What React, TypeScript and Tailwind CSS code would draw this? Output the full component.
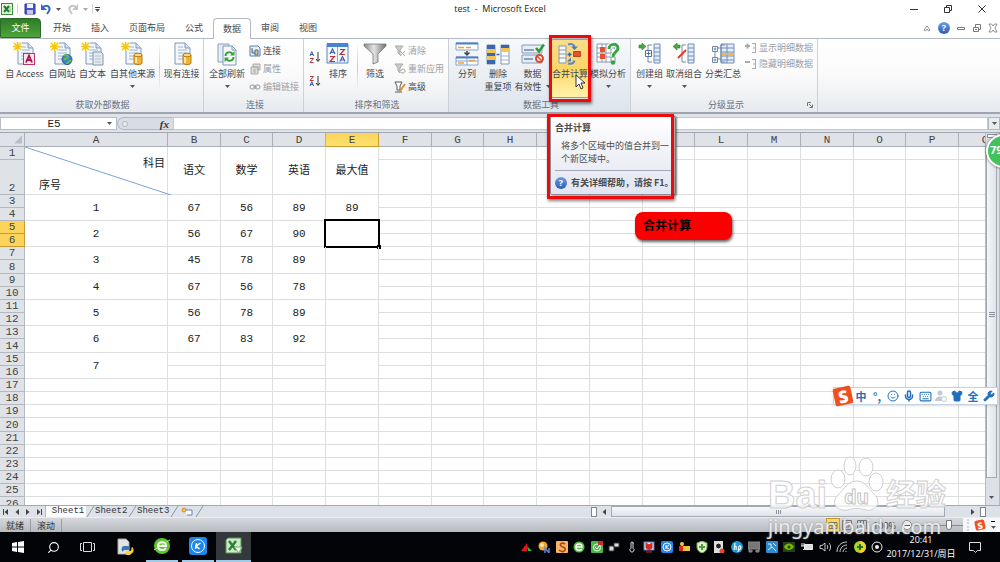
import React from "react";
import { Search, Wrench, Mic, Keyboard, Smile, Shirt, MessageSquare, Thermometer } from "lucide-react";

const COLUMNS = "BCDEFGHIJKLMNOPQ".split("");
const ROWS = Array.from({ length: 26 }, (_, i) => i + 1);

const SCORES = [
  ["1", "67", "56", "89", "89"],
  ["2", "56", "67", "90", ""],
  ["3", "45", "78", "89", ""],
  ["4", "67", "56", "78", ""],
  ["5", "56", "78", "89", ""],
  ["6", "67", "83", "92", ""],
];

function Svg({ size = 24, className = "", children }: {
  size?: number;
  className?: string;
  children: React.ReactNode;
}) {
  return (
    <svg viewBox={`0 0 ${size} ${size}`} width={size} height={size} className={`shrink-0 ${className}`} fill="none" aria-hidden="true">
      {children}
    </svg>
  );
}

function Doc({ star = true, children }: { star?: boolean; children?: React.ReactNode }) {
  return (
    <Svg>
      <path d="M5 1h10l5 5v16H5z" fill="#f3f7fc" stroke="#7f98b8" />
      <path d="M15 1v5h5" fill="#d5e2f1" stroke="#7f98b8" />
      <path d="M8 8h9M8 11h9M8 14h9M8 17h9M8 5h5" stroke="#9db4d2" />
      {star && (
        <>
          <path d="M0 0h9v9H0z" fill="#fff9c9" opacity=".8" />
          <path d="M4.500 0v9M0 4.500h9M1 1l7 7M8 1L1 8" stroke="#f3c613" strokeWidth="1.300" />
        </>
      )}
      {children}
    </Svg>
  );
}

const Cylinder = () => (
  <>
    <path d="M13 13v8c0 2 8 2 8 0v-8z" fill="#f0b432" stroke="#b97a10" />
    <path d="M15 14v7" stroke="#fde6a0" strokeWidth="2" />
    <ellipse cx="17" cy="13" rx="4" ry="1.800" fill="#fbdc82" stroke="#b97a10" />
  </>
);

const AccessIcon = () => (
  <Doc>
    <rect x="10.500" y="11.500" width="11" height="11" fill="#fbe4ec" stroke="#c2356a" />
    <path d="M13 20.500l3-7 3 7M14 18h4" stroke="#a6154c" strokeWidth="1.800" />
  </Doc>
);

const WebIcon = () => (
  <Doc>
    <circle cx="17" cy="17.500" r="5" fill="#3f7fd2" stroke="#28579c" />
    <path d="M14 14c2-2 4-1 4 1s-3 1-4 3M17 22c0-3 3-2 4-4" stroke="#5fbf4a" strokeWidth="2" />
  </Doc>
);

const TextIcon = () => (
  <Doc>
    <path d="M12 10h8l2 2v11H12z" fill="#e6eaf0" stroke="#8292a8" />
    <path d="M14 14h6M14 17h6M14 20h6" stroke="#b4c0cf" />
  </Doc>
);

const RefreshAllIcon = () => (
  <Svg>
    <path d="M3 2h11v18H3z" fill="#e3ecf7" stroke="#8aa1be" />
    <path d="M8 4h9l4 4v15H8z" fill="#f7fafd" stroke="#7f98b8" />
    <path d="M17 4v4h4" stroke="#7f98b8" />
    <path d="M10.500 14c0-4 5-5 7-2M18.500 15c0 4-5 5-7 2" stroke="#35a43b" strokeWidth="2" />
    <path d="M19.500 9v4.500H15zM9.500 20v-4.500H14z" fill="#35a43b" />
  </Svg>
);

const SortIcon = () => (
  <Svg>
    <path d="M1 2h21v19H1z" fill="#f4f8fd" stroke="#5b82bd" />
    <path d="M1 1h21v4H1z" fill="#4b83d3" />
    <path d="M11.500 5v16" stroke="#8fa8cb" />
    <path d="M4 12l2.500-5L9 12M5 10.500h3" stroke="#3561b0" strokeWidth="1.200" />
    <path d="M14 7.500h4.500l-4.500 5h5" stroke="#b3353d" strokeWidth="1.200" />
    <path d="M4 14.500h4.500l-4.500 5h5" stroke="#b3353d" strokeWidth="1.200" />
    <path d="M14 19.500l2.500-5 2.500 5M15 18h3" stroke="#3561b0" strokeWidth="1.200" />
  </Svg>
);

const FilterIcon = () => (
  <Svg>
    <defs>
      <linearGradient id="funnel" x1="0" x2="1">
        <stop offset="0" stopColor="#8b8b8b" />
        <stop offset=".45" stopColor="#e4e4e4" />
        <stop offset="1" stopColor="#6f6f6f" />
      </linearGradient>
    </defs>
    <path d="M1 2h22v2l-8 8v8l-5 2V12L1 4z" fill="url(#funnel)" stroke="#7a7a7a" strokeWidth=".8" />
  </Svg>
);

const SplitIcon = () => (
  <Svg>
    <path d="M1 1h22v7H1z" fill="#fff" stroke="#86a3cd" />
    <path d="M1 1.500h22" stroke="#4f7fc7" strokeWidth="2" />
    <path d="M3 5.500h6M11 5.500h5" stroke="#eba43b" strokeWidth="1.500" />
    <path d="M12 9v4M9.500 10.500L12 13l2.500-2.500" stroke="#444" strokeWidth="1.500" />
    <path d="M1 15h22v8H1zM12 15v8M1 19h22" fill="#fff" stroke="#86a3cd" />
    <path d="M1 15.500h22" stroke="#4f7fc7" strokeWidth="2" />
    <path d="M3 21h6M14 18.500h6" stroke="#eba43b" strokeWidth="1.500" />
  </Svg>
);

const DedupeIcon = () => (
  <Svg>
    <path d="M1 3h8v19H1zM15 3h8v19h-8z" fill="#fff" stroke="#8497b5" />
    <path d="M1 3h8v4H1zM1 11h8v3H1zM1 18h8v4H1zM15 3h8v3h-8z" fill="#3b66b3" />
    <path d="M1 7h8v4H1zM1 14h8v4H1zM15 6h8v4h-8z" fill="#f5c54f" />
    <path d="M15 14h8M15 18h8" stroke="#9aaecb" />
    <path d="M10.500 12.500h3" stroke="#3b66b3" strokeWidth="1.500" />
  </Svg>
);

const ValidIcon = () => (
  <Svg>
    <path d="M1 3h20v8H1zM1 13h20v8H1z" fill="#e5edf7" stroke="#8c9cb5" />
    <path d="M3 8h10M3 17h9" stroke="#6f87a8" strokeWidth="1.500" />
    <path d="M15 6l3 3.500 5-7" stroke="#2c9a36" strokeWidth="2.500" />
    <circle cx="18.500" cy="16.500" r="3.500" fill="#fff" stroke="#dc4a2b" strokeWidth="2" />
    <path d="M16 14l5 5" stroke="#dc4a2b" strokeWidth="1.500" />
  </Svg>
);

const ConsolidateIcon = () => (
  <Svg>
    <path d="M1 4h7v17H1zM1 8h7M1 12h7M1 16h7" fill="#f6f8fb" stroke="#8a98ad" />
    <path d="M9.500 12.500h4M11.500 10.500v4" stroke="#2f5fae" strokeWidth="1.500" />
    <path d="M15.500 9.500h7v5h-7z" fill="#e8502f" stroke="#c2431f" />
    <path d="M10 2.500c4-1 6 0 6.500 2.500M10 21.500c4 1 6-1 6.500-3" stroke="#5b86cb" strokeWidth="2" />
    <path d="M13 4.500h7L16.500 8zM13 19.500h-4l4-4z" fill="#4a79c4" />
  </Svg>
);

const WhatIfIcon = () => (
  <Svg>
    <path d="M1 2h18v18H1zM1 6h18M1 11h18M1 15h18M6 2v18M10 2v18M15 2v18" fill="#fff" stroke="#8796ae" />
    <path d="M4 5h5v5H4zM4 12h5v5H4z" fill="#e5502e" />
    <path d="M13 7c0-6 9-6 9-1 0 4-5 4-5 9" stroke="#fff" strokeWidth="5" />
    <path d="M13 7c0-6 9-6 9-1 0 4-5 4-5 9" stroke="#3aa544" strokeWidth="3" />
    <circle cx="17" cy="20.500" r="2.300" fill="#3aa544" />
  </Svg>
);

function TreeIcon({ kind }: { kind: "group" | "ungroup" | "subtotal" }) {
  return (
    <Svg>
      <path d={kind === "subtotal" ? "M10 2h13v19H10zM10 6h13M10 10h13M10 14h13M10 18h13M16 2v19" : "M16 2h6v19h-6zM16 6h6M16 10h6M16 14h6M16 18h6"} fill="#e4edf9" stroke="#6f8db9" />
      <path d="M14 3h-4v17h4" stroke="#7487a3" />
      {kind === "group" && <path d="M7.500 8.500h6v6h-6zM10.500 9.500v4M8.500 11.500h4" fill="#fff" stroke="#566f94" />}
      {kind === "ungroup" && <path d="M6 16l8-8" stroke="#e0392b" strokeWidth="2" />}
      {kind === "subtotal" ? (
        <>
          <path d="M1.500 4.500h5v5h-5zM1.500 15.500h5v5h-5zM7 6h3M7 17h3M4 9v6M4 5.500v3M2.500 7h3M4 16.500v3M2.500 18h3" fill="#fff" stroke="#7487a3" />
          <path d="M11 12h4M17 12h5" stroke="#f0b44a" strokeWidth="2" />
        </>
      ) : (
        <path d={kind === "group" ? "M1 3h3V1l4 3.500L4 8V6H1z" : "M8 3H5V1L1 4.500 5 8V6h3z"} fill="#49a842" stroke="#2d7c2b" strokeWidth=".6" />
      )}
    </Svg>
  );
}

function SortSmall({ desc = false }: { desc?: boolean }) {
  return (
    <Svg size={12}>
      <g transform={desc ? "translate(0 6)" : undefined}>
        <path d="M1 5l1.800-4.500L4.600 5M1.500 3.500h2.500" stroke="#3561b0" />
      </g>
      <g transform={desc ? "translate(0 -6)" : undefined}>
        <path d="M1 7.500h3.500L1 11.500h3.500" stroke="#b3353d" />
      </g>
      <path d="M9 1v9M7 8l2 2.500L11 8" stroke="#333" />
    </Svg>
  );
}

function Caret({ className = "" }: { className?: string }) {
  return (
    <svg viewBox="0 0 5 3" width="5" height="3" className={`shrink-0 ${className}`} aria-hidden="true">
      <path d="M0 0h5L2.500 3z" fill="#555" />
    </svg>
  );
}

function BigButton({ icon, label, second, caret, className = "pt-[3px]" }: {
  icon: React.ReactNode;
  label: string;
  second?: string;
  caret?: boolean;
  className?: string;
}) {
  return (
    <button type="button" className={`flex shrink-0 flex-col items-center text-[9px] leading-[13px] whitespace-nowrap text-[#44484f] ${className}`}>
      {icon}
      <span className="mt-px">{label}</span>
      {(second || caret) && (
        <span className="flex h-[13px] items-center gap-1">
          {second}
          {caret && <Caret />}
        </span>
      )}
    </button>
  );
}

function SmallButton({ icon, label, disabled }: { icon: React.ReactNode; label: string; disabled?: boolean }) {
  return (
    <button type="button" disabled={disabled} className="flex items-center gap-0.5 text-[9px] leading-[13px] whitespace-nowrap text-[#44484f] disabled:text-[#9c9fa4]">
      {icon}
      {label}
    </button>
  );
}

function Group({ label, className = "", launcher, children }: {
  label: string;
  className?: string;
  launcher?: boolean;
  children: React.ReactNode;
}) {
  return (
    <div className={`relative flex shrink-0 flex-col border-r border-[#cdd1d7] ${className}`}>
      <div className="flex min-h-0 flex-1">{children}</div>
      <div className="h-3.5 text-center text-[9px] leading-[13px] text-[#68717e]">{label}</div>
      {launcher && (
        <button type="button" aria-label="对话框" className="absolute right-1 bottom-1">
          <Svg size={6}>
            <path d="M.5 4V.5H4M2 2l3 3M5.500 2.500v3h-3" stroke="#777" />
          </Svg>
        </button>
      )}
    </div>
  );
}

const Divider = ({ className = "" }: { className?: string }) => (
  <div className={`mt-1 h-12 w-px bg-linear-to-b from-transparent via-[#c5c9cf] to-transparent ${className}`} />
);

function TitleBar() {
  return (
    <header className="relative flex h-[18px] shrink-0 items-center justify-between px-px">
      <div className="flex items-center">
        <Svg size={12}>
          <rect x=".5" y=".5" width="11" height="11" fill="#e4f3de" stroke="#3b8a3e" />
          <path d="M3 3l5 6M8 3L3 9" stroke="#1f7a2d" strokeWidth="2" />
          <path d="M9 3v6" stroke="#7fbf7a" />
        </Svg>
        <div className="mx-1 h-2.5 w-px bg-gray-300" />
        <button type="button" aria-label="保存" className="ml-0.5">
          <Svg size={12}>
            <path d="M1 1h10v10H1z" fill="#4a55c8" stroke="#2f3794" />
            <path d="M3 1h6v4H3z" fill="#eef1ff" />
            <path d="M3 7h6v4H3z" fill="#c3c9ef" />
          </Svg>
        </button>
        <button type="button" aria-label="撤消" className="ml-1 flex items-center gap-1">
          <Svg size={12}>
            <path d="M3 4c4-3 8 0 6 4l-2 3" stroke="#3769c4" strokeWidth="2" />
            <path d="M1 1v6h6z" fill="#3769c4" />
          </Svg>
          <Caret />
        </button>
        <button type="button" aria-label="恢复" className="ml-1.5 flex items-center gap-1">
          <Svg size={12}>
            <path d="M9 4C5 1 1 4 3 8l2 3" stroke="#c2c5ca" strokeWidth="2" />
            <path d="M11 1v6H5z" fill="#c2c5ca" />
          </Svg>
          <Caret className="opacity-50" />
        </button>
        <div className="mr-0.5 ml-1 h-2.5 w-px bg-gray-300" />
        <button type="button" aria-label="自定义快速访问工具栏" className="flex flex-col items-center gap-px">
          <span className="h-px w-[5px] bg-gray-700" />
          <Caret />
        </button>
      </div>
      <h1 className="absolute inset-x-0 mx-auto w-max font-['Open_Sans'] text-[9px] leading-[18px] text-[#222]">test&nbsp; -&nbsp; Microsoft Excel</h1>
      <div className="flex items-center gap-6 pr-3">
        <button type="button" aria-label="最小化">
          <Svg size={10}><path d="M1 5.500h8" stroke="#333" /></Svg>
        </button>
        <button type="button" aria-label="还原">
          <Svg size={10}><path d="M1.500 3.500h5v5h-5zM3.500 3V1.500h5v5H7" stroke="#333" /></Svg>
        </button>
        <button type="button" aria-label="关闭">
          <Svg size={10}><path d="M1.500 1.500l7 7M8.500 1.500l-7 7" stroke="#333" /></Svg>
        </button>
      </div>
    </header>
  );
}

function TabRow() {
  const tab = "h-full w-[38px]";
  return (
    <nav className="flex h-[21px] shrink-0 border-b border-[#b3b9c2] text-[9px] leading-5 whitespace-nowrap text-[#44484f]">
      <button type="button" className="mr-0.5 w-[41px] rounded-tr-sm border border-[#2b6b26] bg-linear-to-b from-[#2f7b2a] to-[#4ea53a] leading-[18px] text-white">文件</button>
      <button type="button" className={tab}>开始</button>
      <button type="button" className={tab}>插入</button>
      <button type="button" className="h-full w-14">页面布局</button>
      <button type="button" className={tab}>公式</button>
      <button type="button" className="-mb-px h-[21px] w-[38px] rounded-t-sm border border-b-0 border-[#b3b9c2] bg-white leading-[18px]">数据</button>
      <button type="button" className={tab}>审阅</button>
      <button type="button" className={tab}>视图</button>
      <div className="ml-auto flex items-center gap-1.5 pr-0.5">
        <button type="button" aria-label="功能区最小化">
          <Svg size={10}><path d="M2 7L5 3l3 4-1.500 1L5 6 3.500 8z" stroke="#777" strokeWidth=".8" /></Svg>
        </button>
        <button type="button" aria-label="帮助"><HelpDot /></button>
        <button type="button" aria-label="最小化窗口">
          <Svg size={10}><path d="M1.500 4.500h7v2h-7z" stroke="#777" /></Svg>
        </button>
        <button type="button" aria-label="还原窗口">
          <Svg size={10}><path d="M1.500 4.500h5v4h-5zM3.500 4V1.500h5v5H7M3 6.500h2" stroke="#777" /></Svg>
        </button>
        <button type="button" aria-label="关闭窗口">
          <Svg size={10}><path d="M1 1h2.500L5 3l1.500-2H9L7 5l2 4H6.500L5 7 3.500 9H1l2-4z" stroke="#777" strokeWidth=".8" /></Svg>
        </button>
      </div>
    </nav>
  );
}

function HelpDot() {
  return (
    <span className="flex size-3 shrink-0 items-center justify-center rounded-full bg-linear-to-b from-[#6f9be0] to-[#2a5db8] font-['Open_Sans'] text-[9px] leading-3 font-bold text-white">?</span>
  );
}

function Ribbon() {
  return (
    <div className="flex h-[75px] shrink-0 border-b-2 border-[#9fa5ae] bg-linear-to-b from-white via-[#fafafb] to-[#e7eaee]">
      <Group label="获取外部数据" className="w-[204px] pl-0.5">
        <BigButton icon={<AccessIcon />} label="自 Access" className="w-[45px] pt-[3px]" />
        <BigButton icon={<WebIcon />} label="自网站" className="w-[30px] pt-[3px]" />
        <BigButton icon={<TextIcon />} label="自文本" className="w-[31px] pt-[3px]" />
        <BigButton icon={<Doc><Cylinder /></Doc>} label="自其他来源" caret className="w-[49px] pt-[3px]" />
        <Divider className="mx-0.5" />
        <BigButton icon={<Doc star={false}><Cylinder /></Doc>} label="现有连接" className="w-[39px] pt-[3px]" />
      </Group>
      <Group label="连接" className="w-[100px] pl-[3px]">
        <BigButton icon={<RefreshAllIcon />} label="全部刷新" caret className="w-10 pt-[3px]" />
        <div className="flex flex-col gap-[5px] pt-[5px] pl-0.5">
          <SmallButton
            label="连接"
            icon={
              <Svg size={12}>
                <path d="M1 1h8l2 2v8H1z" fill="#e8f0fa" stroke="#5a7db0" />
                <path d="M3 3v5h3M6 5h3v5H6z" fill="#f0c050" stroke="#3f6db2" />
              </Svg>
            }
          />
          <SmallButton
            label="属性"
            disabled
            icon={
              <Svg size={12}>
                <path d="M2 4h7v7H2zM4 1h7v6H9V4H4zM4 7h3M4 9h3" fill="#ddd" stroke="#aaa" />
              </Svg>
            }
          />
          <SmallButton
            label="编辑链接"
            disabled
            icon={
              <Svg size={12}>
                <rect x="1" y="4" width="5" height="4" rx="2" stroke="#999" />
                <rect x="6" y="4" width="5" height="4" rx="2" stroke="#999" />
                <path d="M4 6h4" stroke="#999" />
              </Svg>
            }
          />
        </div>
      </Group>
      <Group label="排序和筛选" className="w-[145px] pl-0.5">
        <div className="flex w-[18px] flex-col items-center gap-3 pt-3">
          <button type="button" aria-label="升序"><SortSmall /></button>
          <button type="button" aria-label="降序"><SortSmall desc /></button>
        </div>
        <BigButton icon={<SortIcon />} label="排序" className="w-7 pt-[3px]" />
        <Divider className="mx-[5px]" />
        <BigButton icon={<FilterIcon />} label="筛选" className="w-6 pt-[3px]" />
        <div className="flex flex-col gap-[5px] pt-[5px] pl-[7px]">
          <SmallButton
            label="清除"
            disabled
            icon={<Svg size={12}><path d="M1 1h8L6 5v5L4 8V5zM6 6l5 5M11 6l-5 5" fill="#ccc" stroke="#aaa" /></Svg>}
          />
          <SmallButton
            label="重新应用"
            disabled
            icon={<Svg size={12}><path d="M1 1h8L6 5v5L4 8V5z" fill="#ccc" stroke="#aaa" /><path d="M7 8c1-3 4-2 4 0s-3 3-4 1" stroke="#999" /></Svg>}
          />
          <SmallButton
            label="高级"
            icon={<Svg size={12}><path d="M1 1h7L6 5v4L3 9V5zM1 11h7" fill="#fff" stroke="#555" /><path d="M6 10l5-7" stroke="#d7932c" strokeWidth="2" /></Svg>}
          />
        </div>
      </Group>
      <Group label="数据工具" className="w-[182px] bg-linear-to-b from-[#f7f9fb] to-[#dde4ec] pl-[3px]">
        <BigButton icon={<SplitIcon />} label="分列" className="w-[30px] pt-[3px]" />
        <BigButton icon={<DedupeIcon />} label="删除" second="重复项" className="w-8 pt-[3px]" />
        <BigButton icon={<ValidIcon />} label="数据" second="有效性" caret className="w-[37px] pt-[3px]" />
        <div className="relative">
          <BigButton
            icon={<ConsolidateIcon />}
            label="合并计算"
            className="h-[59px] w-[38px] rounded-xs border border-[#c29b29] bg-linear-to-b from-[#f8dd8b] via-[#fbd667] to-[#fff3a8] pt-0.5"
          />
          <div className="absolute -inset-x-0.5 -top-1 -bottom-1 border-3 border-[#ee0a0a] shadow-[1px_2px_3px_#00000080]" />
          <svg viewBox="0 0 10 16" width="10" height="16" className="absolute top-[35px] left-6" aria-hidden="true">
            <path d="M1 1v12l3-3 2 5 2-1-2-5h4z" fill="#fff" stroke="#222" strokeWidth=".9" />
          </svg>
        </div>
        <BigButton icon={<WhatIfIcon />} label="模拟分析" caret className="w-[38px] pt-[3px]" />
      </Group>
      <Group label="分级显示" className="w-[187px] pl-1" launcher>
        <BigButton icon={<TreeIcon kind="group" />} label="创建组" caret className="w-[29px] pt-[3px]" />
        <BigButton icon={<TreeIcon kind="ungroup" />} label="取消组合" caret className="w-10 pt-[3px]" />
        <BigButton icon={<TreeIcon kind="subtotal" />} label="分类汇总" className="w-[38px] pt-[3px]" />
        <div className="flex flex-col gap-[3px] pt-0.5 pl-[3px]">
          <SmallButton
            label="显示明细数据"
            disabled
            icon={<Svg size={12}><path d="M0 4h5M2.500 1.500v5" stroke="#aaa" strokeWidth="2" /><path d="M7 1.500h3M10.500 1v10M7 10.500h3M8 6h2" stroke="#aaa" /></Svg>}
          />
          <SmallButton
            label="隐藏明细数据"
            disabled
            icon={<Svg size={12}><path d="M0 4h5" stroke="#aaa" strokeWidth="2" /><path d="M7 1.500h3M10.500 1v10M7 10.500h3M8 6h2" stroke="#aaa" /></Svg>}
          />
        </div>
      </Group>
    </div>
  );
}

function FormulaBar() {
  return (
    <div className="flex h-[19px] shrink-0 border-b border-[#a3a9b3] bg-[#dfe3e9] pt-[3px] pb-0.5">
      <div className="flex w-[117px] items-center border border-[#b9bec6] bg-white pr-1">
        <input aria-label="名称框" defaultValue="E5" className="w-0 flex-1 bg-transparent text-center font-['Liberation_Mono'] text-[11px] leading-3 text-[#222] outline-none" />
        <Caret />
      </div>
      <div className="flex w-14 items-center justify-between rounded-l-full border border-r-0 border-[#b3b8c0] bg-[#d9dde3] px-1">
        <span className="size-1.5 rounded-full border border-[#b3b8c0] bg-[#e8ebef]" />
        <button type="button" aria-label="插入函数" className="font-['Liberation_Serif'] text-[11px] leading-3 font-bold text-[#333] italic">fx</button>
      </div>
      <input aria-label="编辑栏" className="w-0 flex-1 border border-[#c4c8cf] bg-white outline-none" />
      <button type="button" aria-label="展开编辑栏" className="flex w-3 items-center justify-center border border-[#b3b8c0] bg-[#e9ecf0]">
        <Caret />
      </button>
    </div>
  );
}

const cell = "border-r border-b border-[#dcdee0] p-0";

function rowHeight(n: number) {
  if (n === 2) return "h-[35px] align-bottom";
  return n > 2 && (n - 2) % 6 === 0 ? "h-3.5" : "h-[13px]";
}

function dataCells(n: number) {
  if (n === 1) {
    return (
      <>
        <td rowSpan={2} className={`${cell} relative text-[11px] leading-4`}>
          <div className="flex h-[46px] flex-col justify-between pt-2">
            <span className="pr-0.5 text-right">科目</span>
            <span className="pl-3.5 text-left">序号</span>
          </div>
          <svg viewBox="0 0 146 48" width="146" height="48" className="absolute top-0 left-0 z-10" aria-hidden="true">
            <path d="M0 0l146 48" stroke="#7ba3d6" />
          </svg>
        </td>
        {["语文", "数学", "英语", "最大值"].map((t) => (
          <td key={t} rowSpan={2} className={`${cell} text-[11px] leading-4`}>{t}</td>
        ))}
      </>
    );
  }
  if (n >= 3 && n <= 14) {
    if (n % 2 === 0) return null;
    return SCORES[(n - 3) / 2].map((v, i) => (
      <td key={i} rowSpan={2} className={`${cell} relative`}>
        {v}
        {n === 5 && i === 4 && (
          <span className="absolute -inset-0.5 border-2 border-black">
            <span className="absolute -right-[3px] -bottom-[3px] size-1 bg-black" />
          </span>
        )}
      </td>
    ));
  }
  if (n === 15) {
    return (
      <>
        <td rowSpan={2} className={cell}>7</td>
        <td className={cell} />
        <td className={cell} />
        <td className={cell} />
        <td rowSpan={2} className={cell} />
      </>
    );
  }
  const count = n === 2 ? 0 : n === 16 ? 3 : 5;
  return Array.from({ length: count }, (_, i) => <td key={i} className={cell} />);
}

function Sheet() {
  return (
    <div className="min-w-0 flex-1 overflow-hidden bg-white">
      <table className="w-px table-fixed border-separate border-spacing-0 text-center font-['Liberation_Mono','Noto_Sans_CJK_SC',monospace] text-[11px] leading-3 text-[#222]">
        <colgroup>
          <col className="w-[25px]" />
          <col className="w-[143px]" />
          {COLUMNS.map((c, i) => (
            <col key={c} className={i % 4 === 1 ? "w-[52px]" : "w-[53px]"} />
          ))}
        </colgroup>
        <thead>
          <tr>
            <th aria-label="全选" className="h-3.5 border-r border-b border-[#aab0b9] bg-[#dfe2e7] p-0">
              <span className="mr-0.5 ml-auto block size-2 bg-[#b9bec6] [clip-path:polygon(100%_0,100%_100%,0_100%)]" />
            </th>
            {["A", ...COLUMNS].map((c) => (
              <th
                key={c}
                className={`h-3.5 border-r border-b p-0 font-normal text-[#444] ${c === "E" ? "border-[#c99a2e] bg-linear-to-b from-[#fcd35e] to-[#fbe36b]" : "border-[#aab0b9] bg-[#dfe2e7]"}`}
              >
                {c}
              </th>
            ))}
          </tr>
        </thead>
        <tbody>
          {ROWS.map((n) => (
            <tr key={n}>
              <th className={`border-r border-b p-0 font-normal text-[#444] ${rowHeight(n)} ${n === 5 || n === 6 ? "border-[#c99a2e] bg-[#fcd45c]" : "border-[#b4b9c1] bg-[#dfe2e7]"}`}>
                {n}
              </th>
              {dataCells(n)}
              {COLUMNS.slice(4).map((c) => (
                <td key={c} className={cell} />
              ))}
            </tr>
          ))}
        </tbody>
      </table>
    </div>
  );
}

function VerticalScroll() {
  return (
    <div className="flex w-[15px] shrink-0 flex-col items-center border-x border-[#b5bac3] bg-[#dde1e7] pr-0.5">
      <div className="mt-px h-1 w-2.5 border border-[#8b919b] bg-white" />
      <div className="flex h-3 items-center"><Caret className="rotate-180" /></div>
      <div className="flex w-full flex-1 flex-col items-center justify-center gap-px border border-[#a3a9b3] bg-linear-to-r from-[#f5f6f8] to-[#dfe3e9]">
        <span className="h-px w-1.5 bg-[#8b919b]" />
        <span className="h-px w-1.5 bg-[#8b919b]" />
        <span className="h-px w-1.5 bg-[#8b919b]" />
      </div>
      <div className="flex h-[27px] items-end pb-1.5"><Caret /></div>
    </div>
  );
}

function Arrow({ flip, bar }: { flip?: boolean; bar?: boolean }) {
  return (
    <svg viewBox="0 0 6 6" width="6" height="6" className={flip ? "-scale-x-100" : ""} aria-hidden="true">
      <path d="M5 0v6L1.500 3z" fill="#444" />
      {bar && <path d="M.5 0v6" stroke="#444" />}
    </svg>
  );
}

function SheetTabs() {
  return (
    <div className="flex h-3 shrink-0 border-t border-[#a3a9b3] bg-[#dde1e8]">
      <div className="flex w-[46px] items-center justify-around border-r border-[#b5bac3]">
        <button type="button" aria-label="第一张"><Arrow bar /></button>
        <button type="button" aria-label="上一张"><Arrow /></button>
        <button type="button" aria-label="下一张"><Arrow flip /></button>
        <button type="button" aria-label="最后一张"><Arrow flip bar /></button>
      </div>
      <div className="flex flex-1 font-['Liberation_Mono'] text-[9px] leading-[11px] text-[#333]">
        <button type="button" className="w-10 bg-white pl-1">Sheet1</button>
        {["Sheet2", "Sheet3"].map((t) => (
          <button key={t} type="button" className="flex w-[42px] items-center">
            <Slash />
            {t}
          </button>
        ))}
        <button type="button" aria-label="插入工作表" className="flex items-center gap-0.5">
          <Slash />
          <svg viewBox="0 0 12 10" width="12" height="10" fill="none" aria-hidden="true">
            <path d="M3 3h8v5H6" fill="#fff" stroke="#5d86c4" />
            <circle cx="3" cy="3" r="2" fill="#f7c25a" stroke="#d98b28" />
          </svg>
          <Slash />
        </button>
      </div>
      <div className="flex w-[409px] items-center">
        <span className="h-2.5 w-1.5 border border-[#7f8690] bg-white" />
        <button type="button" aria-label="向左滚动" className="px-1"><Arrow /></button>
        <div className="flex h-full w-[334px] items-center justify-center gap-px border border-[#a3a9b3] bg-linear-to-b from-[#f7f8fa] to-[#dfe3e9]">
          <span className="h-1 w-px bg-[#8b919b]" />
          <span className="h-1 w-px bg-[#8b919b]" />
          <span className="h-1 w-px bg-[#8b919b]" />
        </div>
        <button type="button" aria-label="向右滚动" className="ml-auto px-1"><Arrow flip /></button>
        <span className="mr-3.5 h-2.5 w-1.5 border border-[#7f8690] bg-white" />
      </div>
    </div>
  );
}

const Slash = () => (
  <svg viewBox="0 0 9 11" width="9" height="11" className="shrink-0" aria-hidden="true">
    <path d="M1 11L8 0" stroke="#8f959e" />
  </svg>
);

function SogouMark({ className = "" }: { className?: string }) {
  return (
    <span className={`flex shrink-0 items-center justify-center rounded-xs bg-[#f0501e] font-['Open_Sans'] font-extrabold text-white ${className}`}>S</span>
  );
}

function StatusBar() {
  return (
    <div className="flex h-[15px] shrink-0 items-center border-t border-[#eceef1] bg-linear-to-b from-[#d6d8dc] to-[#b6bbc1] text-[9px] leading-[13px] text-[#333]">
      <span className="w-[31px] border-r border-[#989da5] pl-1.5">就绪</span>
      <span className="w-[31px] border-r border-[#989da5] pl-1.5">滚动</span>
      <div className="ml-auto flex items-center">
        <button type="button" aria-label="普通" className="flex h-3.5 w-3.5 items-center justify-center border border-[#c29b29] bg-[#fcd765]">
          <Svg size={10}><path d="M1 2.500h8v6H1zM1 5.500h8M4 2v6M6.500 2v6" stroke="#776" /></Svg>
        </button>
        <button type="button" aria-label="页面布局" className="ml-px px-px">
          <Svg size={10}><path d="M.5.5h9v9h-9zM3 3h4v4H3z" stroke="#777" /></Svg>
        </button>
        <button type="button" aria-label="分页预览" className="ml-1">
          <Svg size={10}><path d="M.5 9V.5h9V9M3.500 1v5h3V1" stroke="#777" /></Svg>
        </button>
        <span className="mx-1.5 font-['Open_Sans']">100%</span>
        <button type="button" aria-label="缩小" className="flex size-2.5 items-center justify-center rounded-full border border-[#888] bg-white">
          <span className="h-px w-1.5 bg-gray-600" />
        </button>
        <input
          type="range"
          aria-label="显示比例"
          defaultValue={75}
          className="h-px w-[51px] appearance-none bg-[#868b93] [&::-webkit-slider-thumb]:h-2.5 [&::-webkit-slider-thumb]:w-1.5 [&::-webkit-slider-thumb]:appearance-none [&::-webkit-slider-thumb]:rounded-b-sm [&::-webkit-slider-thumb]:border [&::-webkit-slider-thumb]:border-[#777] [&::-webkit-slider-thumb]:bg-white"
        />
        <div className="flex h-[15px] w-[37px] items-center justify-between bg-[#f7f8fa] px-1">
          <span className="h-3 border-l-2 border-dotted border-gray-300" />
          <SogouMark className="size-2.5 -rotate-12 text-[9px] leading-none" />
          <span className="flex flex-col gap-1">
            <span className="h-px w-1 bg-black" />
            <Caret />
          </span>
        </div>
      </div>
    </div>
  );
}

const TRAY: React.ReactNode[] = [
  <path d="M0 10l6-8v8z" fill="#e3151a" />,
  <><circle cx="5" cy="5" r="4.500" fill="#f4a623" /><circle cx="4" cy="4" r="2" fill="#fde0a0" /><path d="M7 12V7l4 5V7" stroke="#5c86d8" strokeWidth="1.500" /></>,
  <><rect width="12" height="12" rx="1" fill="#f9b46b" /><path d="M9 3C6 1 3 3 5 5s5 1 4 4-5 1-6 0" stroke="#a9490d" strokeWidth="1.600" /></>,
  <><circle cx="6" cy="6" r="5.500" fill="#58bd3c" /><path d="M3 6h6c0-4-6-4-6 0s4 4 6 2" stroke="#fff" strokeWidth="1.500" /></>,
  <><rect width="12" height="12" rx="1" fill="#49b64a" /><circle cx="6" cy="6.500" r="3.500" stroke="#e9ffe0" /><path d="M4 6l2 2 3-4" stroke="#fff" /><path d="M7 0h5v4H7z" fill="#c2312f" /></>,
  <path d="M1 5h5v5H1zM6 2h5v4H6z" fill="#ddd" stroke="#333" />,
  null,
  <><rect x="1" y="1" width="10" height="8" fill="#d8e5f7" stroke="#5c7fb8" /><path d="M3 2l3 2 3-2v5L6 9 3 7zM3 11h6" fill="#d9291f" stroke="#d9291f" /></>,
  <><rect width="12" height="12" rx="2" fill="#2686ee" /><circle cx="6" cy="6" r="4" stroke="#fff" /><path d="M5 4v4M8 4L5 6l3 2" stroke="#fff" /></>,
  <><path d="M1 5h5v5H1z" fill="#d92b1e" /><path d="M5 5h7v5H5z" fill="#f6c436" /><circle cx="4" cy="3" r="2" fill="#edd03b" /></>,
  <><path d="M6 0l5 2v4c0 3-2 5-5 6-3-1-5-3-5-6V2z" fill="#dff0d0" stroke="#7aa94e" /><path d="M6 3v6M3 6h6" stroke="#4f9e30" strokeWidth="2" /></>,
  <><rect x="1" y="0" width="9" height="12" fill="#ddd" /><circle cx="5.500" cy="5" r="3" fill="#222" stroke="#fff" /><circle cx="9" cy="10" r="2.500" fill="#e5472f" /></>,
  <><circle cx="6" cy="6" r="6" fill="#1e9bd8" /><path d="M4 2L3 9M3.500 6c2-2 2 0 1.500 3M8 5l-1 6M8 5c3-1 2 4-.5 4" stroke="#fff" strokeWidth="1.100" /></>,
  <path d="M0 1h12v7H0zM1 8v3h3V9M8 9v2h3V8" fill="#777" stroke="#888" />,
  <><rect width="12" height="12" rx="1" fill="#2f8bd0" /><path d="M2 3h3v3M7 2l3 3M2 9l4-3 4 4" stroke="#d2edff" /></>,
  <><rect y="1" width="12" height="10" fill="#25401a" /><path d="M1 6c3-5 8-4 10 0-3 4-8 4-10 0z" fill="#76b900" /><circle cx="6" cy="6" r="1.500" fill="#25401a" /></>,
  <><path d="M3.500 3.500h8v5h-8z" fill="#ddd" stroke="#eee" /><path d="M1 2v3M3 2v3M0 5h4v2L2 9" stroke="#eee" /></>,
  <path d="M1 4.500h2L6 2v8L3 7.500H1zM8 4c1 1 1 3 0 4M10 2c2 2 2 6 0 8" stroke="#ddd" strokeWidth=".9" />,
  <path d="M1 11C1 5 5 1 11 1M4 11c0-4 3-7 7-7M7 11c0-2 2-4 4-4M9.500 10.500h1" stroke="#ccc" />,
  <><circle cx="6" cy="6" r="6" fill="#a7d428" /><path d="M6 0a6 6 0 010 12z" fill="#f5d027" /><path d="M6 3v6M3 6h6" stroke="#226b1b" strokeWidth="2" /></>,
  <><circle cx="6" cy="6" r="5" stroke="#eee" /><circle cx="6" cy="6" r="2" fill="#eee" /></>,
];

function Taskbar() {
  return (
    <footer className="flex h-[30px] shrink-0 items-center bg-[#020408] text-white">
      <button type="button" aria-label="开始菜单" className="flex w-[35px] justify-center">
        <Svg size={12}><path d="M0 2l5-1v4.500H0zM6 1l6-1v5.500H6zM0 6.500h5V11l-5-1zM6 6.500h6V12l-6-1z" fill="#fff" /></Svg>
      </button>
      <button type="button" aria-label="搜索" className="flex w-9 justify-center"><Search size={13} strokeWidth={2} className="-scale-x-100" /></button>
      <button type="button" aria-label="任务视图" className="flex w-[34px] justify-center">
        <Svg size={16}><path d="M3.500 3.500h8v9h-8zM2 4.500H.5v7H2M13 4.500h1.500v7H13" stroke="#ddd" /></Svg>
      </button>
      <button type="button" aria-label="Python" className="flex w-[39px] justify-center">
        <Svg size={18}>
          <path d="M2 1h8l3 3v12H2z" fill="#e4e4e2" stroke="#aaa" />
          <path d="M8 8h4c2 0 2 4 0 4H9c-2 0-2 3-3 1s0-5 2-5z" fill="#3c78b4" />
          <path d="M16 9c2 1 2 6 0 6l-2 2h-3c-2 0-2-4 0-4h3c2 0 1-3 2-4z" fill="#f8d13c" />
        </Svg>
      </button>
      <button type="button" aria-label="浏览器" className="mx-0.5 flex h-full w-8 items-center justify-center border-b-2 border-[#9ecbe8]">
        <Svg size={18}>
          <circle cx="9" cy="9" r="8" fill="#5cc62c" />
          <path d="M5 9h8c0-5-8-5-8 0s6 5 8 2" stroke="#fff" strokeWidth="2" />
          <path d="M1 13c3-2 12-8 16-10" stroke="#b8ec8b" />
        </Svg>
      </button>
      <button type="button" aria-label="酷狗" className="mx-0.5 flex h-full w-8 items-center justify-center border-b-2 border-[#9ecbe8]">
        <Svg size={18}>
          <rect width="18" height="18" rx="3" fill="#1d85ee" />
          <circle cx="9" cy="9" r="6.500" stroke="#fff" />
          <path d="M7.500 6l-1 6M11.500 6L7 9l3.500 3" stroke="#fff" strokeWidth="1.500" />
        </Svg>
      </button>
      <button type="button" aria-label="Excel" className="flex h-full w-[35px] items-center justify-center border-b-2 border-[#9ecbe8] bg-[#34373c]">
        <Svg size={18}>
          <path d="M3 1h13v15H1V3z" fill="#cfe8c8" stroke="#4f9a4c" />
          <path d="M4 4l7 9M11 4l-7 9" stroke="#2a8136" strokeWidth="2.500" />
          <path d="M9 10h8l-3 6z" fill="#f2f7ef" stroke="#70a76b" />
        </Svg>
      </button>
      <div className="ml-auto flex w-[368px] items-center justify-around">
        {TRAY.map((icon, i) =>
          icon ? <Svg key={i} size={12}>{icon}{i === 0 && <path d="M6 5l5 5H7z" fill="#25b93a" />}</Svg> : <Thermometer key={i} size={12} color="#ddd" />
        )}
      </div>
      <div className="w-[70px] text-center font-['Open_Sans','Noto_Sans_CJK_SC',sans-serif] text-[9px] leading-[14px] whitespace-nowrap">
        <div>20:41</div>
        <div>2017/12/31/周日</div>
      </div>
      <button type="button" aria-label="通知" className="mr-[18px] ml-3">
        <Svg size={14}><path d="M1.500 2.500h11v8h-3l-2 2-2-2h-4z" stroke="#ddd" /></Svg>
      </button>
    </footer>
  );
}

function Tooltip() {
  return (
    <div className="absolute top-[114px] left-[547px]">
      <div role="tooltip" className="mt-0.5 ml-[3px] w-[126px] rounded-xs border border-[#8b8f98] bg-linear-to-b from-white to-[#e2e4f0] px-1 text-[9px] leading-[13px] text-[#4c4c4c] shadow-[1px_1px_2px_#00000066]">
        <p className="pt-1 pb-[5px] font-bold">合并计算</p>
        <p className="pb-[5px] pl-[6px] whitespace-nowrap">将多个区域中的值合并到一<br />个新区域中。</p>
        <div className="flex items-center gap-1 border-t border-[#a5a9b5] py-[5px] font-bold whitespace-nowrap">
          <HelpDot />
          有关详细帮助，请按 F1。
        </div>
      </div>
      <div className="absolute top-0 left-0 h-[85px] w-[127px] border-3 border-[#ee0a0a] shadow-[1px_2px_3px_#00000080]" />
    </div>
  );
}

const ImeItem = ({ children }: { children: React.ReactNode }) => (
  <span className="flex w-4 shrink-0 justify-center text-[11px] leading-none font-bold">{children}</span>
);

function ImeBar() {
  return (
    <div className="absolute right-0.5 bottom-[157px] flex h-[18px] w-[165px] items-center border border-[#c8d2de] bg-white text-[#1f6fc0] shadow-sm">
      <SogouMark className="mr-auto size-[18px] -rotate-12 text-[17px] leading-none" />
      <ImeItem>中</ImeItem>
      <ImeItem>°,</ImeItem>
      <ImeItem><Smile size={12} /></ImeItem>
      <ImeItem><Mic size={12} strokeWidth={3} /></ImeItem>
      <ImeItem><Keyboard size={13} /></ImeItem>
      <ImeItem>
        <Svg size={12} className="opacity-50">
          <circle cx="5" cy="3" r="2.500" fill="#8a97a8" />
          <path d="M0 11c0-6 10-6 10 0z" fill="#8a97a8" />
          <circle cx="9" cy="9" r="2.500" fill="#fff" stroke="#8a97a8" />
        </Svg>
      </ImeItem>
      <ImeItem><Shirt size={12} fill="#1f6fc0" /></ImeItem>
      <ImeItem>全</ImeItem>
      <ImeItem><Wrench size={12} fill="#1f6fc0" /></ImeItem>
    </div>
  );
}

function Watermark() {
  const outline = "text-white/80 [-webkit-text-stroke:1px_#cfcfcf]";
  return (
    <div className="pointer-events-none absolute right-[54px] bottom-[23px] w-[178px] font-['Liberation_Sans','Noto_Sans_CJK_SC',sans-serif] font-bold">
      <div className="flex h-[58px] items-end justify-between leading-[36px]">
        <span className={`text-[38px] ${outline}`}>Bai</span>
        <div className="relative h-[58px] w-[54px]">
          <svg viewBox="0 0 54 58" width="54" height="58" fill="#ffffffcc" stroke="#cfcfcf" aria-hidden="true">
            <ellipse cx="8" cy="24" rx="7" ry="9" />
            <ellipse cx="20" cy="11" rx="6" ry="9" />
            <ellipse cx="36" cy="12" rx="7" ry="9" />
            <ellipse cx="46" cy="27" rx="7" ry="9" />
            <path d="M27 26c8 0 12 8 17 13 9 9 1 18-8 16-6-2-12-2-18 0C7 57 0 48 8 40c6-6 10-14 19-14z" />
          </svg>
          <span className="absolute inset-x-0 bottom-1 text-center text-[20px] leading-6 text-white [-webkit-text-stroke:1px_#c4c4c4]">du</span>
        </div>
        <span className={`text-[30px] ${outline}`}>经验</span>
      </div>
      <p className="mt-0.5 font-['Noto_Sans'] text-[20px] leading-6 font-normal whitespace-nowrap text-white/80 [text-shadow:0_0_2px_#888]">jingyan.baidu.com</p>
    </div>
  );
}

export default function App() {
  return (
    <div className="relative flex h-screen flex-col overflow-hidden bg-white font-['Noto_Sans_CJK_SC',sans-serif]">
      <TitleBar />
      <TabRow />
      <Ribbon />
      <FormulaBar />
      <main className="flex min-h-0 flex-1">
        <Sheet />
        <VerticalScroll />
      </main>
      <SheetTabs />
      <StatusBar />
      <Taskbar />

      <Tooltip />
      <div className="absolute top-[212px] left-[635px] h-7 w-[97px] rounded-lg bg-[#fb0000] pl-2 text-[12px] leading-[26px] font-bold text-black shadow-[1px_2px_3px_#00000099]">
        合并计算
      </div>
      <div className="absolute top-[134px] -right-5 h-[34px] w-[34px] rounded-full border-2 border-white bg-[#3fc35a] pl-0.5 font-['Open_Sans'] text-[11px] leading-7 font-bold text-white shadow-[0_0_3px_#00000099]">
        79
      </div>
      <ImeBar />
      <Watermark />
    </div>
  );
}
